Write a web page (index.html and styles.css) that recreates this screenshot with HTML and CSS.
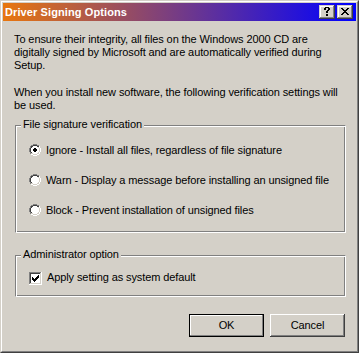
FILE: index.html
```html
<!DOCTYPE html>
<html>
<head>
<meta charset="utf-8">
<title>Driver Signing Options</title>
<link rel="stylesheet" href="styles.css">
</head>
<body>
<div class="window">
  <div class="frame">
    <div class="titlebar">
      <span class="title">Driver Signing Options</span>
      <div class="caption-buttons">
        <div class="cbtn">
          <svg width="16" height="14" viewBox="0 0 16 14" shape-rendering="crispEdges"><path fill="#000" d="M6 2h4v1h-4z M5 3h2v1h-2z M9 3h2v1h-2z M5 4h2v1h-2z M9 4h2v1h-2z M8 5h2v1h-2z M7 6h2v1h-2z M7 7h2v1h-2z M7 9h2v1h-2z M7 10h2v1h-2z"/></svg>
        </div>
        <div class="cbtn">
          <svg width="16" height="14" viewBox="0 0 16 14" shape-rendering="crispEdges"><path fill="#000" d="M4 3h2v1h-2z M10 3h2v1h-2z M5 4h2v1h-2z M9 4h2v1h-2z M6 5h4v1h-4z M7 6h2v1h-2z M6 7h4v1h-4z M5 8h2v1h-2z M9 8h2v1h-2z M4 9h2v1h-2z M10 9h2v1h-2z"/></svg>
        </div>
      </div>
    </div>
    <div class="client">
      <p class="para">To ensure their integrity, all files on the Windows 2000 CD are<br>digitally signed by Microsoft and are automatically verified during<br>Setup.</p>
      <p class="para para-second">When you install new software, the following verification settings will<br>be used.</p>

      <div class="group group-verify">
        <span class="legend">File signature verification</span>
        <div class="option">
          <svg class="radio" width="12" height="12" viewBox="0 0 12 12" shape-rendering="crispEdges">
            <path fill="#808080" d="M4 0h4v1h-4z M2 1h2v1h-2z M8 1h2v1h-2z M1 2h1v2h-1z M0 4h1v4h-1z M1 8h1v2h-1z"/>
            <path fill="#ffffff" d="M10 2h1v2h-1z M11 4h1v4h-1z M10 8h1v2h-1z M2 10h2v1h-2z M8 10h2v1h-2z M4 11h4v1h-4z M4 2h4v1h-4z M3 3h6v1h-6z M2 4h8v4h-8z M3 8h6v1h-6z M4 9h4v1h-4z"/>
            <path fill="#404040" d="M4 1h4v1h-4z M2 2h2v1h-2z M8 2h2v1h-2z M2 3h1v1h-1z M1 4h1v4h-1z M2 8h1v1h-1z"/>
            <path fill="#d4d0c8" d="M9 3h1v1h-1z M10 4h1v4h-1z M9 8h1v1h-1z M2 9h2v1h-2z M8 9h2v1h-2z M4 10h4v1h-4z"/>
            <path fill="#000000" d="M5 4h2v1h-2z M4 5h4v2h-4z M5 7h2v1h-2z"/>
          </svg>
          <span>Ignore - Install all files, regardless of file signature</span>
        </div>
        <div class="option">
          <svg class="radio" width="12" height="12" viewBox="0 0 12 12" shape-rendering="crispEdges">
            <path fill="#808080" d="M4 0h4v1h-4z M2 1h2v1h-2z M8 1h2v1h-2z M1 2h1v2h-1z M0 4h1v4h-1z M1 8h1v2h-1z"/>
            <path fill="#ffffff" d="M10 2h1v2h-1z M11 4h1v4h-1z M10 8h1v2h-1z M2 10h2v1h-2z M8 10h2v1h-2z M4 11h4v1h-4z M4 2h4v1h-4z M3 3h6v1h-6z M2 4h8v4h-8z M3 8h6v1h-6z M4 9h4v1h-4z"/>
            <path fill="#404040" d="M4 1h4v1h-4z M2 2h2v1h-2z M8 2h2v1h-2z M2 3h1v1h-1z M1 4h1v4h-1z M2 8h1v1h-1z"/>
            <path fill="#d4d0c8" d="M9 3h1v1h-1z M10 4h1v4h-1z M9 8h1v1h-1z M2 9h2v1h-2z M8 9h2v1h-2z M4 10h4v1h-4z"/>
          </svg>
          <span>Warn - Display a message before installing an unsigned file</span>
        </div>
        <div class="option">
          <svg class="radio" width="12" height="12" viewBox="0 0 12 12" shape-rendering="crispEdges">
            <path fill="#808080" d="M4 0h4v1h-4z M2 1h2v1h-2z M8 1h2v1h-2z M1 2h1v2h-1z M0 4h1v4h-1z M1 8h1v2h-1z"/>
            <path fill="#ffffff" d="M10 2h1v2h-1z M11 4h1v4h-1z M10 8h1v2h-1z M2 10h2v1h-2z M8 10h2v1h-2z M4 11h4v1h-4z M4 2h4v1h-4z M3 3h6v1h-6z M2 4h8v4h-8z M3 8h6v1h-6z M4 9h4v1h-4z"/>
            <path fill="#404040" d="M4 1h4v1h-4z M2 2h2v1h-2z M8 2h2v1h-2z M2 3h1v1h-1z M1 4h1v4h-1z M2 8h1v1h-1z"/>
            <path fill="#d4d0c8" d="M9 3h1v1h-1z M10 4h1v4h-1z M9 8h1v1h-1z M2 9h2v1h-2z M8 9h2v1h-2z M4 10h4v1h-4z"/>
          </svg>
          <span>Block - Prevent installation of unsigned files</span>
        </div>
      </div>

      <div class="group group-admin">
        <span class="legend">Administrator option</span>
        <div class="option">
          <svg class="checkbox" width="13" height="13" viewBox="0 0 13 13" shape-rendering="crispEdges">
            <path fill="#808080" d="M0 0h12v1h-12z M0 1h1v11h-1z"/>
            <path fill="#ffffff" d="M12 0h1v13h-1z M0 12h12v1h-12z M2 2h9v9h-9z"/>
            <path fill="#404040" d="M1 1h10v1h-10z M1 2h1v9h-1z"/>
            <path fill="#d4d0c8" d="M11 1h1v11h-1z M1 11h10v1h-10z"/>
            <path fill="#000000" d="M9 3h1v1h-1z M8 4h2v1h-2z M3 5h1v1h-1z M7 5h3v1h-3z M3 6h2v1h-2z M6 6h3v1h-3z M3 7h5v1h-5z M4 8h3v1h-3z M5 9h1v1h-1z"/>
          </svg>
          <span>Apply setting as system default</span>
        </div>
      </div>

      <div class="buttons">
        <div class="btn btn-default">OK</div>
        <div class="btn">Cancel</div>
      </div>
    </div>
  </div>
</div>
</body>
</html>
```

FILE: styles.css
```css
html, body {
  margin: 0;
  padding: 0;
  background: #d4d0c8;
}

body {
  font-family: "Liberation Sans", Arial, sans-serif;
  font-size: 11px;
  line-height: 13px;
  letter-spacing: -0.1px;
  color: #000;
}

.window {
  width: 359px;
  height: 353px;
  box-sizing: border-box;
  border: 1px solid;
  border-color: #d4d0c8 #404040 #404040 #d4d0c8;
  background: #d4d0c8;
  display: flex;
  flex-direction: column;
}

.frame {
  flex: 1;
  border: 1px solid;
  border-color: #ffffff #808080 #808080 #ffffff;
  padding: 1px;
  display: flex;
  flex-direction: column;
  min-height: 0;
}

.titlebar {
  height: 18px;
  flex: none;
  margin-bottom: 1px;
  padding: 0 3px 0 2px;
  background: linear-gradient(to right, #e8760e, #0000ff);
  display: flex;
  align-items: center;
  justify-content: space-between;
}

.title {
  color: #ffffff;
  font-weight: bold;
  font-size: 11px;
  letter-spacing: 0.1px;
  white-space: nowrap;
}

.caption-buttons {
  display: flex;
  gap: 2px;
}

.cbtn {
  width: 16px;
  height: 14px;
  background: #d4d0c8;
  box-shadow: inset -1px -1px #404040, inset 1px 1px #d4d0c8, inset -2px -2px #808080, inset 2px 2px #ffffff;
}

.cbtn svg {
  display: block;
}

.client {
  flex: 1;
  padding: 11px 10px 0 11px;
  display: flex;
  flex-direction: column;
}

.para {
  margin: 0;
  white-space: nowrap;
}

.para-second {
  margin-top: 14px;
}

.group {
  position: relative;
  box-sizing: border-box;
  margin-left: 1px;
  border: 1px solid;
  border-color: #808080 #ffffff #ffffff #808080;
  box-shadow: inset 1px 1px #ffffff, inset -1px -1px #808080;
  display: flex;
  flex-direction: column;
  padding-left: 13px;
}

.group-verify {
  margin-top: 13px;
  height: 108px;
  padding-top: 18px;
  gap: 17px;
}

.group-admin {
  margin-top: 22px;
  height: 42px;
  padding-top: 15px;
}

.legend {
  position: absolute;
  top: -8px;
  left: 5px;
  padding: 0 2px;
  background: #d4d0c8;
  white-space: nowrap;
}

.option {
  display: flex;
  align-items: flex-start;
  gap: 5px;
  white-space: nowrap;
  height: 13px;
}

.radio {
  display: block;
  flex: none;
}

.checkbox {
  display: block;
  flex: none;
  margin-top: 1px;
}

.buttons {
  margin-top: 17px;
  margin-right: 1px;
  display: flex;
  justify-content: flex-end;
  gap: 6px;
}

.btn {
  width: 75px;
  height: 23px;
  box-sizing: border-box;
  display: flex;
  align-items: center;
  justify-content: center;
  background: #d4d0c8;
  box-shadow: inset -1px -1px #404040, inset 1px 1px #ffffff, inset -2px -2px #808080;
}

.btn-default {
  border: 1px solid #000000;
  box-shadow: inset -1px -1px #808080, inset 1px 1px #ffffff;
}
```
